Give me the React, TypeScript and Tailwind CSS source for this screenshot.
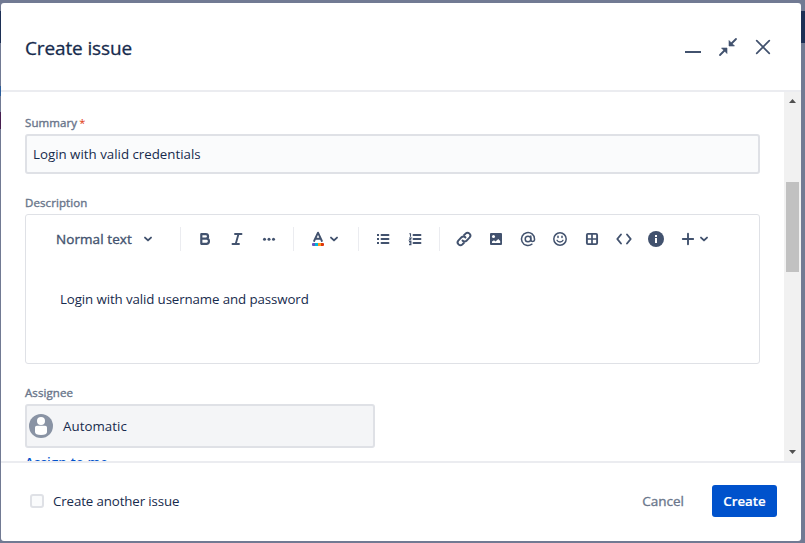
import React from 'react';

type IconProps = { children: React.ReactNode; className?: string };

function Icon({ children, className = '' }: IconProps) {
  return (
    <svg viewBox="0 0 24 24" width="24" height="24" fill="none" stroke="currentColor" className={`block shrink-0 ${className}`}>
      {children}
    </svg>
  );
}

function ToolButton({ children, label }: { children: React.ReactNode; label: string }) {
  return (
    <button aria-label={label} className="flex h-8 w-8 shrink-0 items-center justify-center">
      <Icon>{children}</Icon>
    </button>
  );
}

function Separator() {
  return <div className="mx-2 h-6 w-px shrink-0 bg-[#ebecf0]" />;
}

function Chevron({ className = '' }: { className?: string }) {
  return (
    <svg viewBox="0 0 10 8" width="10" height="8" fill="none" stroke="currentColor" strokeWidth="1.9" strokeLinecap="round" strokeLinejoin="round" className={`block shrink-0 ${className}`}>
      <path d="M2 2.6 5 5.4 8 2.6" />
    </svg>
  );
}

function Header() {
  return (
    <header className="flex h-[89px] shrink-0 items-center justify-between border-b-2 border-[#ebecf0] pr-[26px] pl-6 text-[#42526e]">
      <h1 className="pt-[3px] text-[19px] font-normal tracking-[-0.13px] whitespace-nowrap text-[#172b4d] [-webkit-text-stroke:0.3px_#172b4d]">Create issue</h1>
      <div className="flex items-center gap-[11px]">
        <Icon><path d="M4 17h16" strokeWidth="2" /></Icon>
        <Icon>
          <g strokeWidth="1.8" strokeLinecap="round">
            <path d="M20 4l-4.5 4.5M4 20l4.500-4.500" />
          </g>
          <path d="M13 5.500v5.500h5.500zM5.500 13h5.500v5.500z" fill="currentColor" stroke="currentColor" strokeWidth=".6" strokeLinejoin="round" />
        </Icon>
        <Icon><path d="M5.700 5.700l12.600 12.600M18.300 5.700l-12.600 12.600" strokeWidth="1.7" strokeLinecap="round" /></Icon>
      </div>
    </header>
  );
}

function Toolbar() {
  return (
    <div className="flex h-12 items-center pl-[30px] text-[#42526e]">
      <div className="flex w-[116px] shrink-0 items-center">
        <span className="w-[87px] text-[13.5px] tracking-[0.08px] whitespace-nowrap [-webkit-text-stroke:0.35px_#42526e]">Normal text</span>
        <Chevron />
      </div>
      <Separator />
      <ToolButton label="Bold">
        <path d="M8.300 7.200h4.500a2.200 2.200 0 0 1 0 4.500H8.300zM8.300 11.700h5.100a2.550 2.550 0 0 1 0 5.100H8.300z" strokeWidth="2.200" strokeLinejoin="round" />
      </ToolButton>
      <ToolButton label="Italic">
        <path d="M10 7h6.500M7.500 17H14M13.500 7l-2.800 10" strokeWidth="1.900" strokeLinecap="round" />
      </ToolButton>
      <ToolButton label="More formatting">
        <g fill="currentColor" stroke="none"><circle cx="7.500" cy="12.300" r="1.500" /><circle cx="12" cy="12.300" r="1.500" /><circle cx="16.500" cy="12.300" r="1.500" /></g>
      </ToolButton>
      <Separator />
      <div className="flex w-12 shrink-0 items-center pl-1">
        <Icon>
          <path d="M8.100 14 12 5.700 15.900 14M9.300 11.700h5.400" strokeWidth="1.900" strokeLinecap="round" strokeLinejoin="round" />
          <g stroke="none">
            <path d="M9 16v3H7a1 1 0 0 1-1-1v-1a1 1 0 0 1 1-1z" fill="#6554c0" />
            <path d="M9 16h3v3H9z" fill="#00b8d9" />
            <path d="M12 16h3v3h-3z" fill="#ff991f" />
            <path d="M15 16h2a1 1 0 0 1 1 1v1a1 1 0 0 1-1 1h-2z" fill="#de350b" />
          </g>
        </Icon>
        <Chevron className="-ml-px" />
      </div>
      <Separator />
      <ToolButton label="Bullet list">
        <path d="M10.500 8h7M10.500 12h7M10.500 16h7" strokeWidth="1.900" strokeLinecap="round" />
        <path d="M6 8h2M6 12h2M6 16h2" strokeWidth="2" />
      </ToolButton>
      <ToolButton label="Numbered list">
        <path d="M10.500 8h7M10.500 12h7M10.500 16h7" strokeWidth="1.900" strokeLinecap="round" />
        <path d="M6.300 6.800H7.500v3M6 11h2.200l-1.800 2h2M6 14.600h1.900v3H6M6.500 16H8" strokeWidth="1.100" />
      </ToolButton>
      <Separator />
      <div className="flex items-center">
        <ToolButton label="Link">
          <g strokeWidth="1.900" strokeLinecap="round">
            <path d="M10.500 13.500a2.800 2.800 0 0 0 4 .2l3-3a2.800 2.800 0 0 0-4-4l-1.400 1.300" />
            <path d="M13.500 10.500a2.800 2.800 0 0 0-4-.2l-3 3a2.800 2.800 0 0 0 4 4l1.400-1.300" />
          </g>
        </ToolButton>
        <ToolButton label="Image">
          <rect x="6" y="6" width="12" height="12" rx="1" fill="currentColor" stroke="none" />
          <circle cx="9.500" cy="9.500" r="1.500" fill="white" stroke="none" />
          <path d="M8 16v-1.500l2-1.200 1.500 1.200L14.300 12l1.900 2v2z" fill="white" stroke="none" />
        </ToolButton>
        <ToolButton label="Mention">
          <g strokeWidth="1.500" strokeLinecap="round">
            <circle cx="12" cy="12" r="2.800" />
            <path d="M14.800 9v4a1.900 1.900 0 0 0 3.700 0v-1a6.500 6.500 0 1 0-2.600 5.200" />
          </g>
        </ToolButton>
        <ToolButton label="Emoji">
          <circle cx="12" cy="12" r="6.200" strokeWidth="1.500" />
          <path d="M9 13.300a3.200 2.500 0 0 0 6 0" strokeWidth="1.400" strokeLinecap="round" />
          <path d="M10 9.300v1.200M14 9.300v1.200" strokeWidth="1.500" strokeLinecap="round" />
        </ToolButton>
        <ToolButton label="Table">
          <rect x="6.900" y="6.900" width="10.200" height="10.200" rx="1" strokeWidth="1.900" />
          <path d="M12 7v10M7 12h10" strokeWidth="1.700" />
        </ToolButton>
        <ToolButton label="Code">
          <path d="M9 7.500 5.300 12 9 16.500M15 7.500l3.700 4.500-3.700 4.500" strokeWidth="1.900" strokeLinecap="round" strokeLinejoin="round" />
        </ToolButton>
        <ToolButton label="Info panel">
          <circle cx="12" cy="12" r="8" fill="currentColor" stroke="none" />
          <path d="M11 8h2v2h-2zM11 11h2v5h-2z" fill="white" stroke="none" />
        </ToolButton>
        <ToolButton label="Insert">
          <path d="M12 6.800v10.400M6.800 12h10.400" strokeWidth="1.900" strokeLinecap="round" />
        </ToolButton>
        <Chevron className="-ml-[5px]" />
      </div>
    </div>
  );
}

function Label({ children }: { children: React.ReactNode }) {
  return <div className="h-4 text-[11.5px] leading-4 tracking-[0.09px] whitespace-nowrap text-[#6b778c] [-webkit-text-stroke:0.4px_#6b778c]">{children}</div>;
}

function Scrollbar() {
  return (
    <div className="flex w-[17px] shrink-0 flex-col items-center bg-[#f1f1f1] text-[#505050]">
      <svg width="17" height="17" viewBox="0 0 17 17" className="block shrink-0"><path d="M5 11h7L8.500 7z" fill="currentColor" /></svg>
      <div className="mt-[73px] h-[90px] w-[13px] bg-[#c1c1c1]" />
      <svg width="17" height="17" viewBox="0 0 17 17" className="mt-auto block shrink-0"><path d="M5 6h7l-3.500 4z" fill="currentColor" /></svg>
    </div>
  );
}

function Form() {
  return (
    <div className="flex h-[369px] shrink-0 overflow-hidden">
      <div className="flex-1 overflow-hidden pt-[23px] pr-6 pl-6">
        <div className="flex">
          <Label>Summary</Label>
          <span className="ml-[2px] h-4 text-[11px] leading-4 text-[#de350b]">*</span>
        </div>
        <div className="mt-[3px] flex h-10 items-center rounded-[3px] border-2 border-[#dfe1e6] bg-[#fafbfc] px-1.5 pt-px text-[13.3px] whitespace-nowrap text-[#172b4d]">
          Login with valid credentials
        </div>
        <div className="mt-[21px]"><Label>Description</Label></div>
        <div className="mt-[3px] h-[150px] rounded-[3px] border border-[#dfe1e6]">
          <Toolbar />
          <p className="mt-[26px] pl-[34px] text-[13.3px] leading-5 tracking-[-0.11px] whitespace-nowrap text-[#172b4d]">Login with valid username and password</p>
        </div>
        <div className="mt-[21px]"><Label>Assignee</Label></div>
        <div className="mt-[3px] flex h-11 w-[350px] items-center rounded-[3px] border-2 border-[#dfe1e6] bg-[#f4f5f7] pl-[2px] text-[13.3px] text-[#172b4d]">
          <svg width="24" height="24" viewBox="0 0 24 24" className="block shrink-0">
            <circle cx="12" cy="12" r="12" fill="#8993a4" />
            <circle cx="12" cy="7" r="4" fill="white" />
            <path d="M6 13.500a1.800 1.800 0 0 1 1.800-1.800h8.400a1.800 1.800 0 0 1 1.800 1.800V18q0 3-6 3t-6-3z" fill="white" />
          </svg>
          <span className="ml-[10px] pt-[2px] tracking-[0.05px]">Automatic</span>
        </div>
        <a className="mt-[4px] block text-[13.3px] leading-5 font-semibold tracking-[0.1px] whitespace-nowrap text-[#0052cc]">Assign to me</a>
      </div>
      <Scrollbar />
    </div>
  );
}

function Footer() {
  return (
    <footer className="flex flex-1 items-center border-t-2 border-[#ebecf0] pr-6 pb-[2px] pl-[29px] text-[13.5px] whitespace-nowrap">
      <div className="h-[14px] w-[14px] rounded-[3px] border-2 border-[#dfe1e6] bg-[#fafbfc]" />
      <span className="ml-[9px] pt-[2px] text-[13.3px] tracking-[-0.12px] text-[#172b4d]">Create another issue</span>
      <div className="ml-auto flex items-center">
        <button className="mr-[28px] text-[#6b778c] [-webkit-text-stroke:0.35px_#6b778c]">Cancel</button>
        <button className="h-8 w-[65px] rounded-[3px] bg-[#0052cc] pt-[2px] text-[13.3px] font-semibold text-white [-webkit-text-stroke:0.2px_white]">Create</button>
      </div>
    </footer>
  );
}

export default function App() {
  return (
    <div className="relative h-[543px] w-[805px] overflow-hidden bg-[#717a93] pt-[3px] pl-px font-['Open_Sans','Noto_Sans',sans-serif]">
      <div className="absolute top-[11px] left-0 h-8 w-full bg-[#1c2f55]" />
      <div className="absolute top-[86px] left-0 h-[10px] w-px bg-[#2a5c9a]" />
      <div className="absolute top-[112px] left-0 h-[17px] w-px bg-[#471f50]" />
      <main className="relative flex h-[538px] w-[800px] flex-col overflow-hidden rounded-[3px] bg-white">
        <Header />
        <Form />
        <Footer />
      </main>
    </div>
  );
}
